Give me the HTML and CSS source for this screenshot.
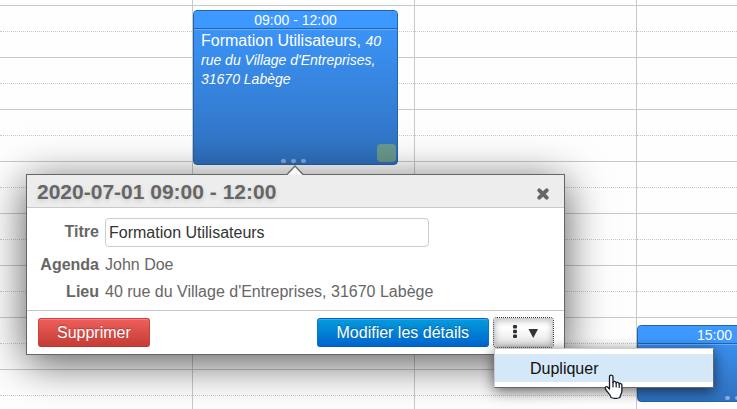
FILE: index.html
```html
<!DOCTYPE html>
<html lang="fr">
<head>
<meta charset="utf-8">
<title>Agenda</title>
<link rel="stylesheet" href="styles.css">
</head>
<body>
<main class="calendar">
  <section class="day">
    <div class="slots"><i></i><i></i><i></i><i></i><i></i><i></i><i></i><i></i><i></i><i></i><i></i><i></i><i></i><i></i><i></i><i></i><i></i></div>
  </section>
  <section class="day">
    <div class="slots"><i></i><i></i><i></i><i></i><i></i><i></i><i></i><i></i><i></i><i></i><i></i><i></i><i></i><i></i><i></i><i></i><i></i></div>
    <article class="event event-morning">
      <div class="event-time">09:00 - 12:00</div>
      <div class="event-body">Formation Utilisateurs, <em>40 rue du Village d'Entreprises, 31670 Labège</em></div>
      <span class="event-tag"></span>
      <span class="grip"><b></b><b></b><b></b></span>
    </article>
  </section>
  <section class="day">
    <div class="slots"><i></i><i></i><i></i><i></i><i></i><i></i><i></i><i></i><i></i><i></i><i></i><i></i><i></i><i></i><i></i><i></i><i></i></div>
  </section>
  <section class="day">
    <div class="slots"><i></i><i></i><i></i><i></i><i></i><i></i><i></i><i></i><i></i><i></i><i></i><i></i><i></i><i></i><i></i><i></i><i></i></div>
    <article class="event event-afternoon">
      <div class="event-time">15:00</div>
      <span class="grip"><b></b><b></b><b></b></span>
    </article>
  </section>
</main>

<form class="popup">
  <svg class="popup-arrow" width="18" height="10" viewBox="0 0 18 10"><path d="M1 10 9 1l8 9z" fill="#f8f8f8"/><path d="M1 9.500 9 1l8 8.500" fill="none" stroke="#666" stroke-width="1.200"/></svg>
  <header class="popup-header">
    <h1>2020-07-01 09:00 - 12:00</h1>
    <button class="close" type="button" aria-label="Fermer"><svg width="12" height="12" viewBox="0 0 12 12"><path d="M2.300 2.300l7.400 7.400M9.700 2.300l-7.400 7.400" stroke="#666" stroke-width="3.900" stroke-linecap="round"/></svg></button>
  </header>
  <div class="fields">
    <label for="titre">Titre</label>
    <input id="titre" type="text" value="Formation Utilisateurs">
    <span class="name">Agenda</span><span>John Doe</span>
    <span class="name">Lieu</span><span>40 rue du Village d'Entreprises, 31670 Labège</span>
  </div>
  <footer class="popup-footer">
    <button class="button danger" type="button">Supprimer</button>
    <button class="button primary" type="button">Modifier les détails</button>
    <div class="more">
      <button class="button more-button" type="button" aria-label="Plus">
        <svg width="26" height="15" viewBox="0 0 26 15" fill="#333"><rect x="0" y="0" width="4" height="3.500" rx="1"/><rect x="0" y="4.700" width="4" height="3.500" rx="1"/><rect x="0" y="9.400" width="4" height="3.500" rx="1"/><path d="M15.500 4h9.500l-4.750 9z"/></svg>
      </button>
      <div class="menu">
        <button class="menu-item" type="button">Dupliquer</button>
        <svg class="pointer" width="19" height="25" viewBox="0 0 19 25"><path d="M5.500 15V3c0-2.500 3.500-2.500 3.500 0v5.500c.3-1.700 3-1.500 3.200.6.600-1.300 2.800-1 3 .9.700-1 2.700-.6 2.700 1.300V17c0 2.500-1.900 3.500-1.900 6.500-2.500 1-6.500 1-9 0-.5-3.500-4.500-5.500-5.700-9-.6-1.800 1.500-2.500 2.500-1.300z" fill="#fff" stroke="#151a2c" stroke-width="1.300" stroke-linejoin="round"/><path d="M9 8v5M12.200 9v4M15.200 10v3.500" stroke="#151a2c" stroke-width="1.200" stroke-linecap="round"/></svg>
      </div>
    </div>
  </footer>
</form>
</body>
</html>
```
FILE: styles.css
```css
* {
  box-sizing: border-box;
}

body {
  margin: 0;
  height: 100vh;
  overflow: hidden;
  position: relative;
  background: #fefefe;
  font: 16px/19px "Liberation Sans", Arial, sans-serif;
  color: #666;
}

/* Week grid */
.calendar {
  display: grid;
  grid-template-columns: 193fr 222fr 222fr 100fr;
}

.day {
  position: relative;
  border-right: 1px solid #c9c9c9;
}

.day:last-child {
  border-right: 0;
  overflow: hidden;
}

.slots i {
  display: block;
  height: 26px;
  border-bottom: 1px solid #c9c9c9;
}

.slots i:first-child {
  height: 6px;
}

.slots i:nth-child(even) {
  border-bottom-style: dotted;
}

.event {
  position: absolute;
  left: 0;
  border: 1px solid #2463a8;
  border-radius: 4px;
  background: linear-gradient(#3d98ff, #2f70bd);
  color: #fff;
}

.event-morning {
  top: 10px;
  width: 205px;
  height: 155px;
}

.event-afternoon {
  top: 325px;
  width: 205px;
  height: 77px;
}

.event-time {
  height: 18px;
  border-bottom: 1px solid #2463a8;
  box-shadow: 0 1px #67adf8;
  background: #3d98ff;
  border-radius: 3px 3px 0 0;
  font-size: 14px;
  line-height: 18px;
  text-align: center;
}

.event-afternoon .event-time {
  padding-left: 59px;
  text-align: left;
}

.event-body {
  padding: 2px 7px;
}

.event-body em {
  font-size: 14px;
  line-height: 16px;
}

.event-tag {
  position: absolute;
  right: 1px;
  bottom: 2px;
  width: 19px;
  height: 18px;
  border-radius: 4px;
  background: #6a988f;
}

.grip {
  position: absolute;
  bottom: 1px;
  left: 0;
  right: 4px;
  display: flex;
  justify-content: center;
  gap: 5px;
}

.grip b {
  width: 5px;
  height: 4px;
  border-radius: 2px;
  background: #86acd9;
}

/* Event popup */
.popup {
  position: absolute;
  top: 174px;
  left: 26px;
  width: 539px;
  border: 1px solid #666;
  background: #fff;
  box-shadow: 0 8px 40px #000000a6;
}

.popup-arrow {
  position: absolute;
  top: -10px;
  left: 259px;
}

.popup-header {
  display: flex;
  align-items: center;
  justify-content: space-between;
  height: 33px;
  padding: 0 15px 0 10px;
  border-bottom: 1px solid #c9c9c9;
  background: #ededed;
}

.popup-header h1 {
  margin: 0;
  padding-top: 2px;
  font-size: 21px;
  line-height: 24px;
  text-shadow: 0 2px 4px #ccc;
}

.close {
  display: flex;
  padding: 6px 0 0;
  border: 0;
  background: none;
}

.fields {
  display: grid;
  grid-template-columns: 72px 1fr;
  column-gap: 6px;
  padding: 10px 0 5px;
  line-height: 27px;
}

.fields label,
.fields .name {
  font-weight: bold;
  text-align: right;
}

.fields input {
  width: 324px;
  height: 29px;
  margin-bottom: 4px;
  padding: 0 3px;
  border: 1px solid #ccc;
  border-radius: 4px;
  background: #fff;
  font: inherit;
  color: #333;
}

.popup-footer {
  display: flex;
  gap: 5px;
  padding: 7px 11px;
  border-top: 1px solid #c9c9c9;
}

.button {
  height: 29px;
  padding: 0 18px;
  border: 1px solid;
  border-radius: 3px;
  font: inherit;
  color: #fff;
  text-shadow: 0 -1px 1px #00000040;
}

.danger {
  margin-right: auto;
  border-color: #d04038 #d04038 #b93630;
  background: linear-gradient(#ee5f5b, #c43c35);
  box-shadow: inset 0 1px #f2807c;
}

.primary {
  padding: 0 19px;
  border-color: #0064cd #0078cc #005cc0;
  background: linear-gradient(#049cdb, #0064cd);
  box-shadow: inset 0 1px #36b0e2;
}

.more {
  position: relative;
}

.more-button {
  display: flex;
  align-items: center;
  width: 59px;
  border-color: #ccc;
  background: linear-gradient(#fff 30%, #e6e6e6);
  box-shadow: inset 0 2px 6px #00000040;
  outline: 1px dotted #333;
}

.more-button svg {
  flex: none;
}

/* Drop-down menu */
.menu {
  position: absolute;
  top: 30px;
  left: 0;
  width: 220px;
  padding: 5px 0;
  border: 1px solid #666;
  border-top-color: #ccc;
  border-left-color: #ccc;
  background: #fff;
  box-shadow: 0 3px 14px #00000099;
}

.menu-item {
  display: block;
  width: 100%;
  height: 28px;
  padding: 0 35px;
  border: 0;
  background: #d5e8f8;
  font: inherit;
  color: #111;
  text-align: left;
}

.pointer {
  position: absolute;
  top: 25px;
  left: 109px;
}
```
